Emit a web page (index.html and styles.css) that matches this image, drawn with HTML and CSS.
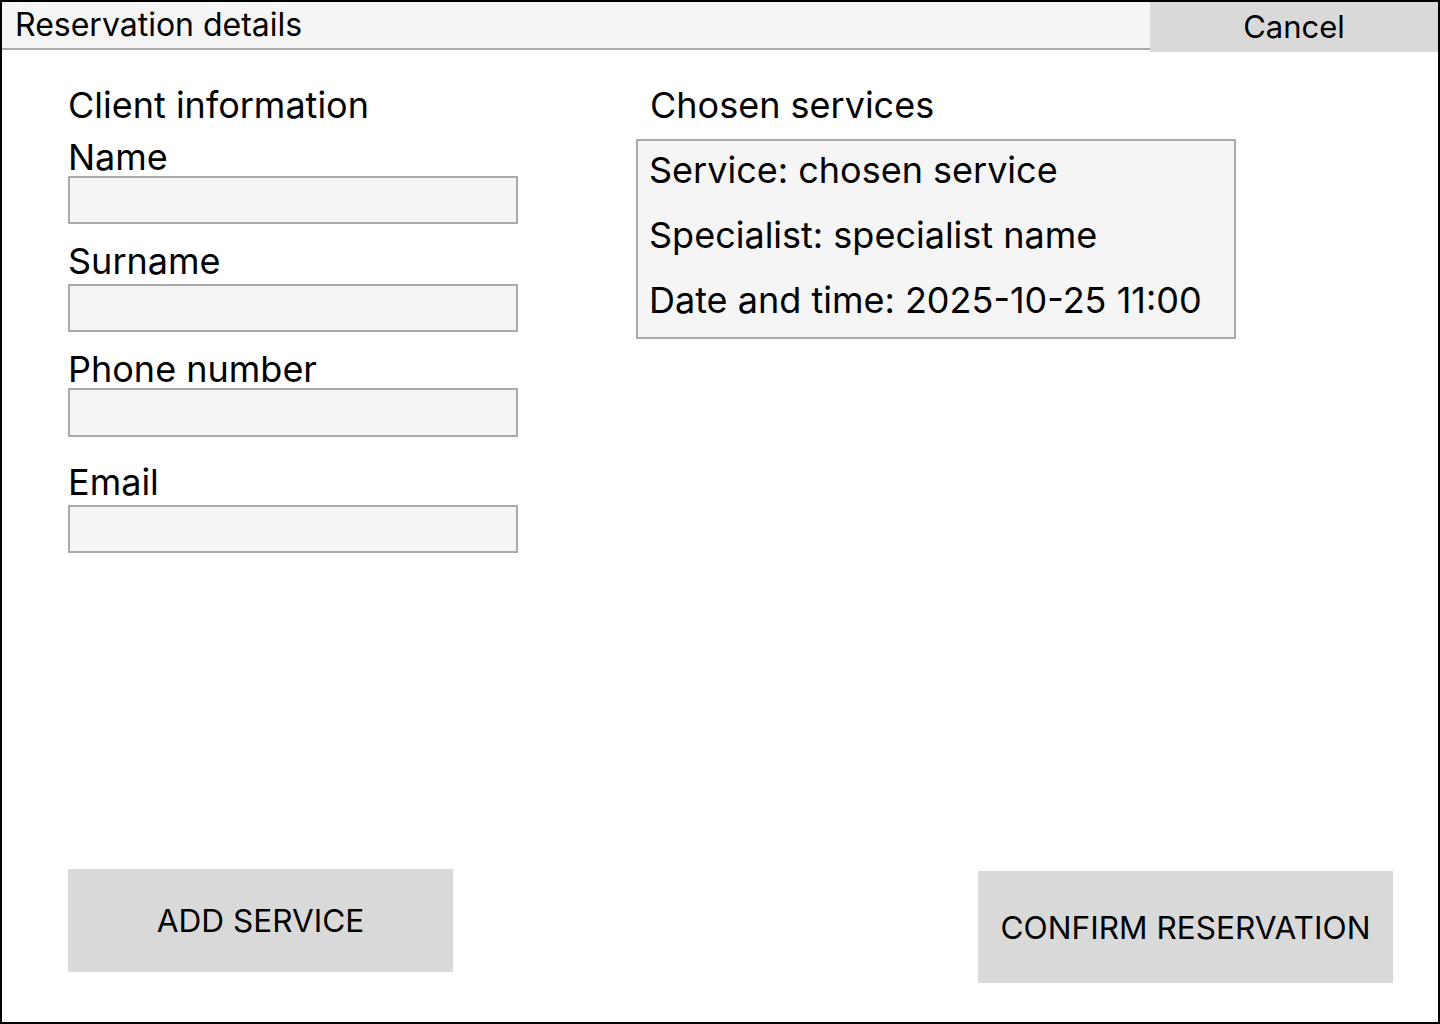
FILE: index.html
```html
<!DOCTYPE html>
<html lang="en">
<head>
<meta charset="utf-8">
<title>Reservation details</title>
<link rel="stylesheet" href="styles.css">
</head>
<body>
<div class="frame">
  <header class="topbar">
    <div class="title">Reservation details</div>
    <button class="cancel" type="button">Cancel</button>
  </header>
  <main class="content">
    <section class="client">
      <h2 class="heading">Client information</h2>
      <div class="field field-name">
        <label class="label">Name</label>
        <div class="input"></div>
      </div>
      <div class="field field-surname">
        <label class="label">Surname</label>
        <div class="input"></div>
      </div>
      <div class="field field-phone">
        <label class="label">Phone number</label>
        <div class="input"></div>
      </div>
      <div class="field field-email">
        <label class="label">Email</label>
        <div class="input"></div>
      </div>
    </section>
    <section class="services">
      <h2 class="heading heading-services">Chosen services</h2>
      <div class="service-box">
        <p class="service-line">Service: chosen service</p>
        <p class="service-line">Specialist: specialist name</p>
        <p class="service-line">Date and time: 2025-10-25 11:00</p>
      </div>
    </section>
  </main>
  <footer class="actions">
    <button class="btn btn-add" type="button">ADD SERVICE</button>
    <button class="btn btn-confirm" type="button">CONFIRM RESERVATION</button>
  </footer>
</div>
</body>
</html>
```
FILE: styles.css
```css
* { box-sizing: border-box; }
html, body { margin: 0; padding: 0; background: #fff; }
body {
  font-family: Inter, "Noto Sans", "Liberation Sans", sans-serif;
  color: #000;
}
.frame {
  width: 1440px;
  height: 1024px;
  border: 2px solid #000;
  display: flex;
  flex-direction: column;
}
.topbar {
  display: flex;
  align-items: flex-start;
  height: 50px;
}
.title {
  flex: 1;
  height: 48px;
  background: #f5f5f5;
  border-bottom: 2px solid #aaa;
  font-size: 32px;
  line-height: 46px;
  padding-left: 13px;
}
.cancel {
  width: 288px;
  height: 50px;
  background: #d9d9d9;
  border: 0;
  margin: 0;
  padding: 0;
  font-family: inherit;
  font-size: 31px;
  line-height: 50px;
  color: #000;
}
.content {
  display: flex;
  padding-left: 66px;
  padding-top: 36px;
  gap: 118px;
}
.client { width: 450px; display: flex; flex-direction: column; }
.services { width: 600px; display: flex; flex-direction: column; }
.heading {
  margin: 0 0 2px;
  font-weight: 400;
  font-size: 36px;
  line-height: 34px;
}
.heading-services { padding-left: 14px; margin-bottom: 17px; }
.field { display: flex; flex-direction: column; }
.field-name { margin-top: 16px; }
.field-surname { margin-top: 20px; }
.field-phone { margin-top: 20px; }
.field-email { margin-top: 28px; }
.label {
  font-size: 36px;
  line-height: 34px;
  margin-bottom: 2px;
}
.field-surname .label { margin-bottom: 6px; }
.field-email .label { margin-bottom: 6px; }
.input {
  height: 48px;
  background: #f5f5f5;
  border: 2px solid #aaa;
}
.field-phone .input { height: 49px; }
.service-box {
  height: 200px;
  background: #f5f5f5;
  border: 2px solid #aaa;
  padding: 0 11px;
  display: flex;
  flex-direction: column;
  row-gap: 6px;
}
.service-line {
  margin: 0;
  font-size: 36px;
  line-height: 59px;
}
.actions {
  margin-top: auto;
  display: flex;
  justify-content: space-between;
  align-items: flex-start;
  padding: 0 45px 39px 66px;
}
.btn {
  border: 0;
  margin: 0;
  background: #d9d9d9;
  font-family: inherit;
  font-size: 31.6px;
  color: #000;
  padding: 0;
}
.btn-add { width: 385px; height: 103px; }
.btn-confirm { width: 415px; height: 112px; margin-top: 2px; padding-top: 1px; }
```
